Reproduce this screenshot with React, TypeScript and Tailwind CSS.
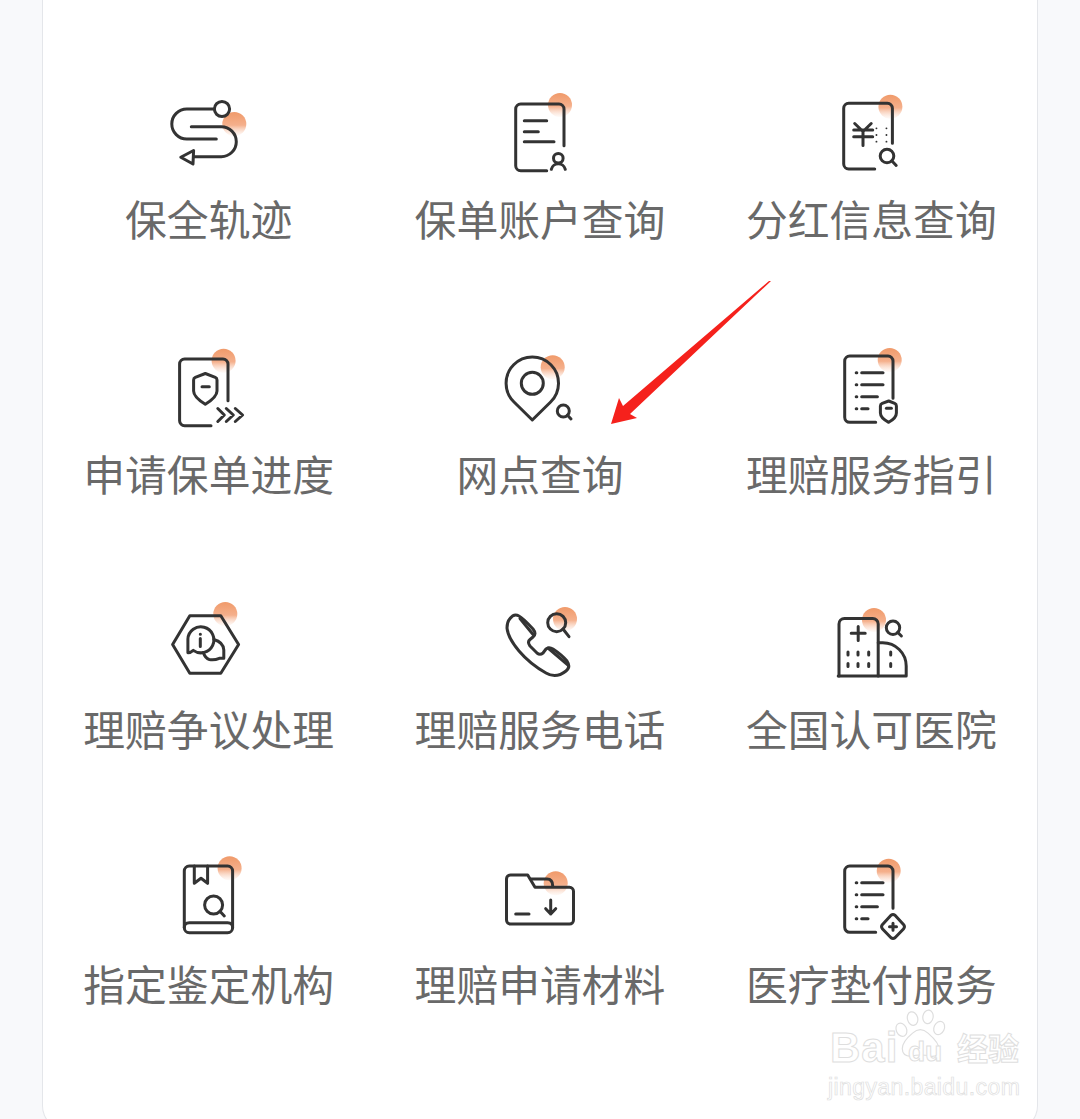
import { useId, type ReactNode } from "react";

const ink = "#333333";

function Icon({
  x,
  y,
  dot,
  children,
}: {
  x: number;
  y: number;
  dot: [number, number];
  children: ReactNode;
}) {
  const id = useId();
  return (
    <svg
      viewBox={`${x} ${y} 100 90`}
      className="h-[90px] w-[100px] shrink-0"
      fill="none"
      stroke={ink}
      strokeWidth={3}
      strokeLinecap="round"
      strokeLinejoin="round"
    >
      <defs>
        <linearGradient id={id} x1="0" y1="0" x2="0" y2="1">
          <stop offset="0" stopColor="#f09a6a" />
          <stop offset="0.55" stopColor="#f5b08c" />
          <stop offset="1" stopColor="#fbe3d6" stopOpacity="0.2" />
        </linearGradient>
      </defs>
      <circle cx={dot[0]} cy={dot[1]} r={12} fill={`url(#${id})`} stroke="none" />
      {children}
    </svg>
  );
}

// open document outline shared by most of the icons
function Doc({ l, t, r, b, re, be }: { l: number; t: number; r: number; b: number; re: number; be: number }) {
  return (
    <path
      d={`M${r} ${re}V${t + 5}a5 5 0 0 0 -5 -5H${l + 5}a5 5 0 0 0 -5 5V${b - 5}a5 5 0 0 0 5 5H${be}`}
    />
  );
}

function Lens({ cx, cy, r, hx, hy }: { cx: number; cy: number; r: number; hx: number; hy: number }) {
  return (
    <>
      <circle cx={cx} cy={cy} r={r} />
      <path d={`M${cx + r * 0.7} ${cy + r * 0.7}L${hx} ${hy}`} />
    </>
  );
}

function ListRows({ y }: { y: number }) {
  const ends = [883.3, 883.3, 877.7, 868.3];
  return (
    <>
      {ends.map((end, i) => (
        <g key={i}>
          <path d={`M856.5 ${y + i * 12}h.6`} />
          <path d={`M862 ${y + i * 12}H${end}`} />
        </g>
      ))}
    </>
  );
}

const items: { label: string; icon: ReactNode }[] = [
  {
    label: "保全轨迹",
    icon: (
      <Icon x={158.7} y={88} dot={[234, 124]}>
        <circle cx={221.7} cy={109} r={7.6} />
        <path d="M214 109H186.5a15 15 0 0 0 0 30H216" />
        <path d="M191 126.7H221a15 15 0 0 1 0 30H193.5" />
        <path d="M193.3 150.5L180.5 157.3L192.7 164Z" />
      </Icon>
    ),
  },
  {
    label: "保单账户查询",
    icon: (
      <Icon x={490} y={88} dot={[560, 105]}>
        <Doc l={515.7} t={104} r={564} b={170.7} re={145.7} be={546.7} />
        <path d="M524.3 120.7H546.7M524.3 131.7H538.3M524.3 141.7H554" />
        <circle cx={558.3} cy={158.3} r={4.8} />
        <path d="M551.3 169.3a7.2 7.2 0 0 1 14 0" />
      </Icon>
    ),
  },
  {
    label: "分红信息查询",
    icon: (
      <Icon x={821.3} y={88} dot={[890.7, 106.7]}>
        <Doc l={844} t={103.3} r={892.7} b={169} re={143.3} be={875} />
        <path d="M855 123.5L863.3 131.5L871.5 123.5M854 130H873M854 136.7H873M863.3 131.5V145.5" />
        <path
          d="M876.7 128.3h.1M886.7 128.3h.1M876.7 135h.1M886.7 135h.1M876.7 141.7h.1M886.7 141.7h.1"
          strokeWidth={1.8}
        />
        <Lens cx={887.3} cy={156} r={6.8} hx={896.5} hy={165.5} />
      </Icon>
    ),
  },
  {
    label: "申请保单进度",
    icon: (
      <Icon x={158.7} y={343} dot={[223.3, 360.7]}>
        <Doc l={179.3} t={359} r={227.7} b={425.7} re={400.7} be={210.7} />
        <path d="M205 373.5L215 377.3Q216.7 378 216.7 380V391Q216.7 397 205 404.3Q193.3 397 193.3 391V380Q193.3 378 195 377.3Z" />
        <path d="M201.7 386.7H209" />
        <path d="M217.5 408.5L224 415L217.5 421.5M226 408.5L233 415L226 421.5M235 408.5L242.3 415L235 421.5" />
      </Icon>
    ),
  },
  {
    label: "网点查询",
    icon: (
      <Icon x={490} y={343} dot={[552.7, 367.3]}>
        <path d="M532.3 420L514 402A26.2 26.2 0 1 1 550.6 402Z" />
        <circle cx={532.3} cy={383.3} r={11} />
        <Lens cx={563.3} cy={411} r={6} hx={571} hy={419} />
      </Icon>
    ),
  },
  {
    label: "理赔服务指引",
    icon: (
      <Icon x={821.3} y={343} dot={[890, 360]}>
        <Doc l={845} t={356} r={893.3} b={422.3} re={398.3} be={876} />
        <ListRows y={372.7} />
        <path d="M889 401L895 403.3Q896.7 404 896.7 406V413Q896.7 418 889 422.3Q880.7 418 880.7 413V406Q880.7 404 882.5 403.3Z" />
        <path d="M886.7 408.3H891.7" />
      </Icon>
    ),
  },
  {
    label: "理赔争议处理",
    icon: (
      <Icon x={158.7} y={598} dot={[225, 614]}>
        <path d="M189.5 615.7H220.5L238.3 644.5L220.5 673.3H189.5L172.3 644.5Z" />
        <path d="M187.6 652.8V639a13 13 0 1 1 5.4 11.4Q190 653 187.6 652.8Z" />
        <path d="M213.5 639.5Q223 642 223.5 650V658.3H219Q214 660.5 209 659.5Q205 658.5 203 652.5" />
        <path d="M200 634.2h.1M200 638.5V646.5" />
      </Icon>
    ),
  },
  {
    label: "理赔服务电话",
    icon: (
      <Icon x={490} y={598} dot={[565, 619]}>
        <path d="M510 618.5Q514 613 519 616Q523 618 533 629Q537 634 533 637L530 639.5Q527 642 530 646L537 653Q540 655.5 543 653L546 649Q549 646.5 553 649Q562 655 567 661Q571 667 566 671Q556 679 546 673Q530 664 519 651Q508 638 507 628Q507 622 510 618.5Z" />
        <path d="M520 618.5L533.5 635M548 648L568 665" />
        <Lens cx={556.7} cy={622.7} r={9} hx={569} hy={636.7} />
      </Icon>
    ),
  },
  {
    label: "全国认可医院",
    icon: (
      <Icon x={821.3} y={598} dot={[874.3, 620]}>
        <path d="M839.3 676V624a5.5 5.5 0 0 1 5.5 -5.5H873a5.5 5.5 0 0 1 5.5 5.5V676" />
        <path d="M838.5 676H906.5V666A23.5 23.5 0 0 0 883 642.7H878.5" />
        <path d="M851.5 633.3H865.5M858.5 626.5V640.5" />
        <path
          d="M848.3 652v3M858.3 652v3M869 652v3M848.3 663.5v3M858.3 663.5v3M869 663.5v3M891 652v3M891 663.5v3"
        />
        <Lens cx={893.3} cy={627.7} r={6.7} hx={901.7} hy={636} />
      </Icon>
    ),
  },
  {
    label: "指定鉴定机构",
    icon: (
      <Icon x={158.7} y={853} dot={[229.3, 868.3]}>
        <rect x={184} y={866} width={48.3} height={66.7} rx={5} />
        <path d="M184 927.5Q184 922.7 189 922.7H227.3Q232.3 922.7 232.3 927.5" />
        <path d="M194 866V883.3L200.7 878.3L207.3 883.3V866" />
        <Lens cx={213.3} cy={905} r={9} hx={224} hy={916} />
      </Icon>
    ),
  },
  {
    label: "理赔申请材料",
    icon: (
      <Icon x={490} y={853} dot={[555.7, 883.3]}>
        <path d="M527.7 875H510.5a4 4 0 0 0 -4 4V920a4 4 0 0 0 4 4H569.5a4 4 0 0 0 4 -4V891.3a4 4 0 0 0 -4 -4H535Z" />
        <path d="M531 879H547Q552.7 879 552.7 886" />
        <path d="M515.7 914H529M550.7 900V914M545.7 908.7L550.7 914L555.7 908.7" />
      </Icon>
    ),
  },
  {
    label: "医疗垫付服务",
    icon: (
      <Icon x={821.3} y={853} dot={[889, 870.7]}>
        <Doc l={845} t={866} r={893.3} b={932.3} re={908.3} be={876} />
        <ListRows y={882.7} />
        <path d="M891.3 915.2Q893.3 913.8 895.3 915.2L904 924.7Q905.5 926.7 904 928.7L895.3 937.7Q893.3 939.2 891.3 937.7L882.6 928.7Q881.1 926.7 882.6 924.7Z" />
        <path d="M889.8 926.7H896.8M893.3 923.2V930.2" />
      </Icon>
    ),
  },
];

function Watermark() {
  return (
    <div className="absolute left-[828px] top-[1000px] h-[100px] w-[200px] font-['Liberation_Sans',sans-serif] text-white [-webkit-text-stroke:1px_#dedede]">
      <span className="absolute left-[2px] top-[24px] text-[42px] font-bold leading-[48px] tracking-[1px]">Bai</span>
      <svg viewBox="0 0 70 70" className="absolute left-[64px] top-[4px] h-[60px] w-[60px]" fill="white" stroke="#dedede" strokeWidth={1.4}>
        <ellipse cx="24" cy="17" rx="6" ry="8" transform="rotate(-15 24 17)" />
        <ellipse cx="42" cy="15" rx="6" ry="8" transform="rotate(10 42 15)" />
        <ellipse cx="11" cy="30" rx="6" ry="8" transform="rotate(-25 11 30)" />
        <ellipse cx="55" cy="28" rx="6" ry="8" transform="rotate(25 55 28)" />
        <path d="M12 52Q12 44 24 34Q33 26 42 34Q56 46 55 54Q54 62 45 61Q33 58 22 61Q12 61 12 52Z" />
      </svg>
      <span className="absolute left-[80px] top-[36px] text-[28px] font-bold leading-[32px]">du</span>
      <span className="absolute left-[129px] top-[27px] font-['Noto_Sans_CJK_SC',sans-serif] text-[31px] font-bold leading-[40px]">经验</span>
      <span className="absolute left-0 top-[73px] whitespace-nowrap text-[23px] leading-[28px] tracking-[0.4px] [-webkit-text-stroke:0.7px_#dedede]">
        jingyan.baidu.com
      </span>
    </div>
  );
}

export default function App() {
  return (
    <div className="relative h-[1119px] w-[1080px] overflow-hidden bg-[#f8f9fb] font-['Noto_Sans_CJK_SC',sans-serif]">
      <div className="mx-[42px] h-[1130px] rounded-b-[24px] border-x border-b border-[#e4e6ea] bg-white pt-[88px]">
        <div className="grid grid-cols-3">
          {items.map((item) => (
            <div key={item.label} className="flex h-[255px] flex-col items-center">
              {item.icon}
              <div className="mt-[15px] whitespace-nowrap text-[41.8px] leading-[50px] text-[#696969]">{item.label}</div>
            </div>
          ))}
        </div>
      </div>
      <svg viewBox="0 0 1080 1119" className="absolute inset-0 h-[1119px] w-[1080px]">
        <polygon points="771,281 630,414 637,418 611,424 619,398 623,406 769,281" fill="#f5211c" />
      </svg>
      <Watermark />
    </div>
  );
}
